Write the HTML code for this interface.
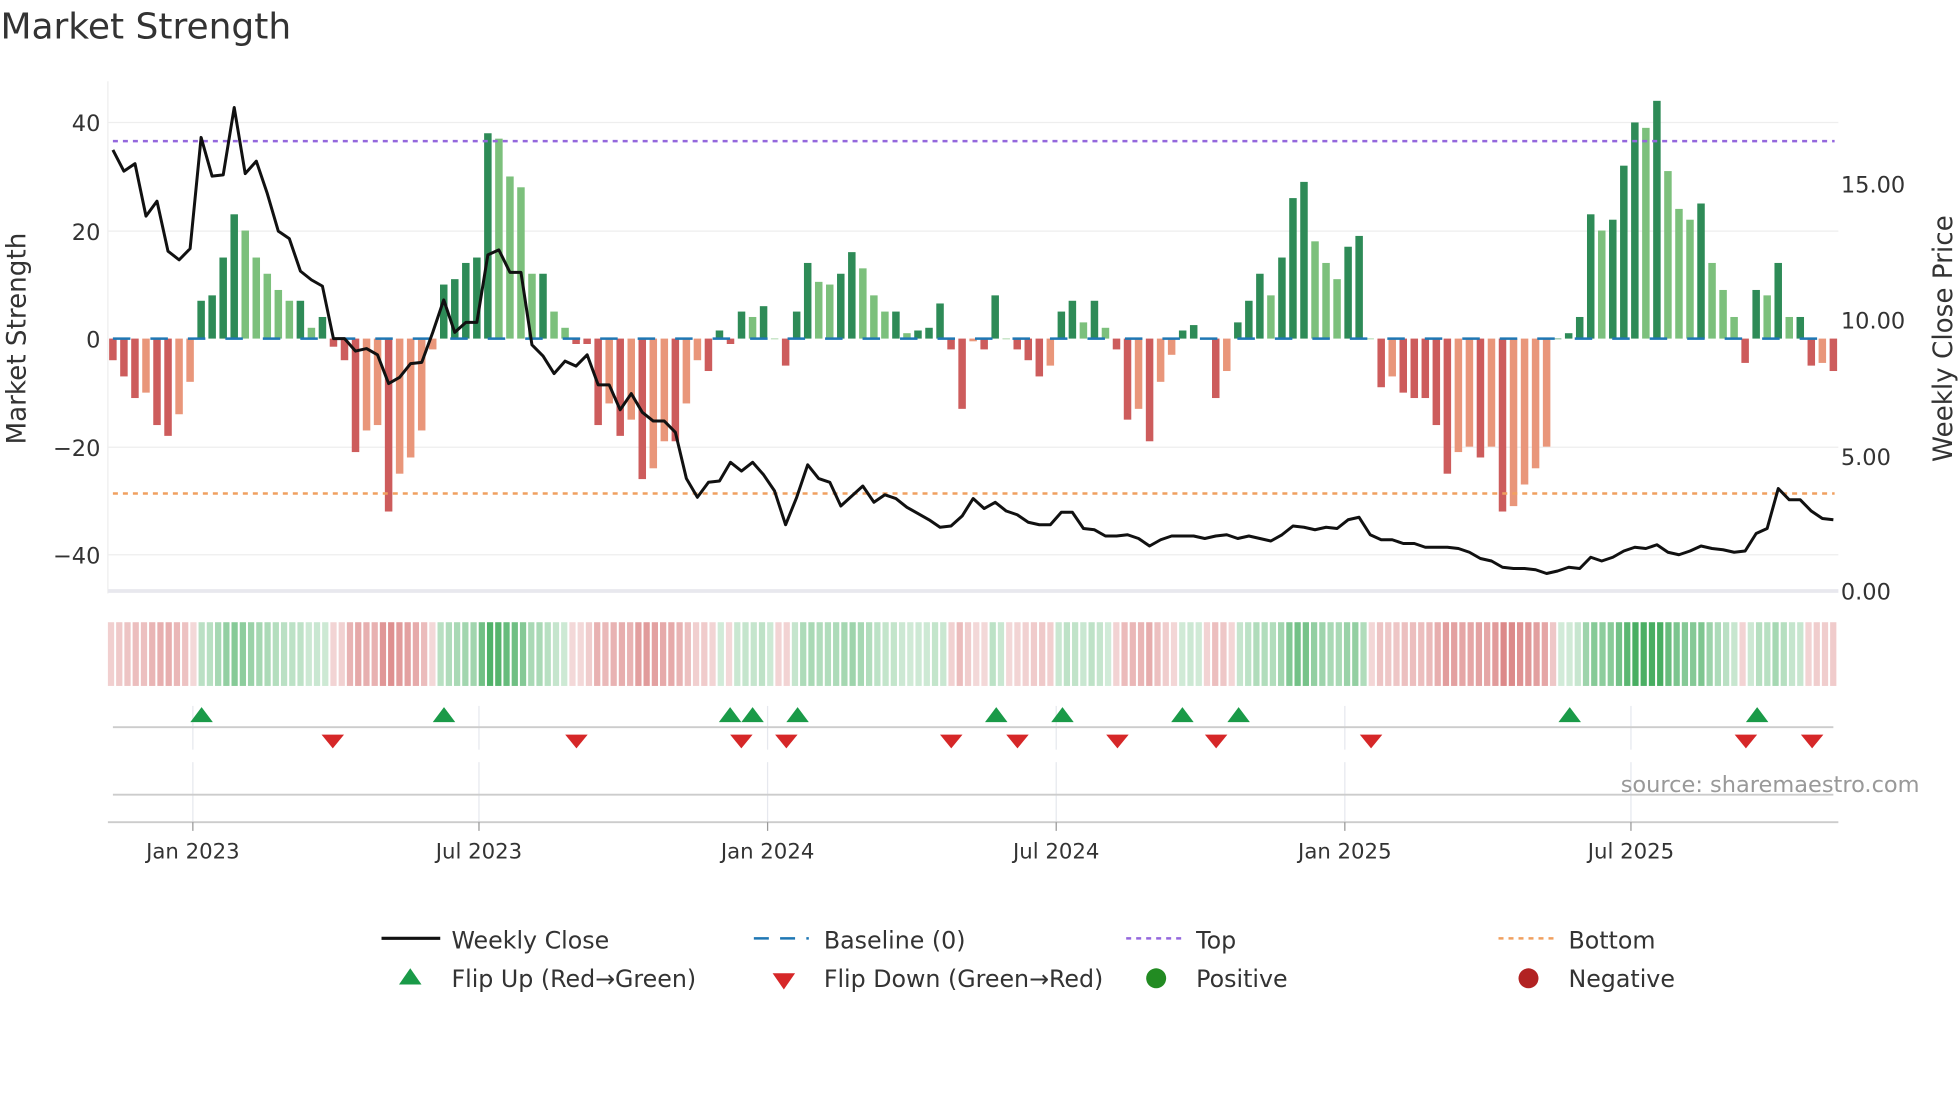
<!DOCTYPE html>
<html><head><meta charset="utf-8"><style>
html,body{margin:0;padding:0;background:#fff;}
svg{display:block;font-family:"DejaVu Sans","Liberation Sans",sans-serif;}
</style></head><body>
<svg id="s" width="1960" height="1102" viewBox="0 0 1568 882" xmlns="http://www.w3.org/2000/svg">
<rect width="1568" height="882" fill="#fff"/>
<text x="0" y="31" font-size="28.8" fill="#333">Market Strength</text>
<g stroke="#eeeeee" stroke-width="1">
<line x1="86" x2="1471" y1="98" y2="98"/><line x1="86" x2="1471" y1="185" y2="185"/>
<line x1="86" x2="1471" y1="358" y2="358"/><line x1="86" x2="1471" y1="444" y2="444"/>
<line x1="86" x2="86" y1="65" y2="475"/>
</g>
<line x1="86" x2="1471" y1="473" y2="473" stroke="#e8e8ee" stroke-width="3"/>
<g font-size="18" fill="#333" text-anchor="end">
<text x="80" y="105">40</text><text x="80" y="192">20</text><text x="80" y="278">0</text>
<text x="80" y="365">−20</text><text x="80" y="451">−40</text>
</g>
<g font-size="18" fill="#333">
<text x="1473" y="154">15.00</text><text x="1473" y="263">10.00</text>
<text x="1473" y="372">5.00</text><text x="1473" y="480">0.00</text>
</g>
<text transform="translate(20,271) rotate(-90)" font-size="21" fill="#333" text-anchor="middle">Market Strength</text>
<text transform="translate(1562,271) rotate(-90)" font-size="21" fill="#333" text-anchor="middle">Weekly Close Price</text>
<g id="bars"></g>
<line x1="90" x2="1468" y1="271" y2="271" stroke="#1f77b4" stroke-width="2" stroke-dasharray="14,16"/>
<line x1="90" x2="1468" y1="113" y2="113" stroke="#9467dd" stroke-width="2" stroke-dasharray="4,4"/>
<line x1="90" x2="1468" y1="395" y2="395" stroke="#f0a060" stroke-width="2" stroke-dasharray="4,4"/>
<polyline id="price" fill="none" stroke="#111" stroke-width="2.4" stroke-linejoin="round"/>
<g id="heat"></g>
<g stroke="#e6e8ee" stroke-width="1">
<line x1="154" x2="154" y1="565" y2="600"/><line x1="383" x2="383" y1="565" y2="600"/><line x1="614" x2="614" y1="565" y2="600"/><line x1="845" x2="845" y1="565" y2="600"/><line x1="1076" x2="1076" y1="565" y2="600"/><line x1="1305" x2="1305" y1="565" y2="600"/>
<line x1="154" x2="154" y1="610" y2="660"/><line x1="383" x2="383" y1="610" y2="660"/><line x1="614" x2="614" y1="610" y2="660"/><line x1="845" x2="845" y1="610" y2="660"/><line x1="1076" x2="1076" y1="610" y2="660"/><line x1="1305" x2="1305" y1="610" y2="660"/>
</g>
<line x1="90" x2="1467" y1="582" y2="582" stroke="#ccc" stroke-width="1.5"/>
<line x1="90" x2="1467" y1="636" y2="636" stroke="#ccc" stroke-width="1.5"/>
<line x1="86" x2="1471" y1="658" y2="658" stroke="#ccc" stroke-width="1.5"/>
<g stroke="#999" stroke-width="1"><line x1="154" x2="154" y1="658" y2="665"/><line x1="383" x2="383" y1="658" y2="665"/><line x1="614" x2="614" y1="658" y2="665"/><line x1="845" x2="845" y1="658" y2="665"/><line x1="1076" x2="1076" y1="658" y2="665"/><line x1="1305" x2="1305" y1="658" y2="665"/></g>
<g id="marks"></g>
<text x="1536" y="634" font-size="18" fill="#999" text-anchor="end">source: sharemaestro.com</text>
<g font-size="17" fill="#333" text-anchor="middle">
<text x="154" y="687">Jan 2023</text><text x="383" y="687">Jul 2023</text><text x="614" y="687">Jan 2024</text>
<text x="845" y="687">Jul 2024</text><text x="1076" y="687">Jan 2025</text><text x="1305" y="687">Jul 2025</text>
</g>
<g font-size="19" fill="#333">
<line x1="305" x2="352" y1="751" y2="751" stroke="#111" stroke-width="2.5"/>
<text x="361" y="759">Weekly Close</text>
<line x1="603" x2="647" y1="751" y2="751" stroke="#1f77b4" stroke-width="2" stroke-dasharray="12,9"/>
<text x="659" y="759">Baseline (0)</text>
<line x1="901" x2="945" y1="751" y2="751" stroke="#9467dd" stroke-width="2" stroke-dasharray="4,4"/>
<text x="957" y="759">Top</text>
<line x1="1199" x2="1243" y1="751" y2="751" stroke="#f0a060" stroke-width="2" stroke-dasharray="4,4"/>
<text x="1255" y="759">Bottom</text>
<polygon points="328,775 319,788 337,788" fill="#1a9a48"/>
<text x="361" y="790">Flip Up (Red→Green)</text>
<polygon points="618,779 636,779 627,792" fill="#d62728"/>
<text x="659" y="790">Flip Down (Green→Red)</text>
<circle cx="925" cy="783" r="8" fill="#228b22"/>
<text x="957" y="790">Positive</text>
<circle cx="1223" cy="783" r="8" fill="#b22222"/>
<text x="1255" y="790">Negative</text>
</g>
</svg>
<script>
var v=[-4,-7,-11,-10,-16,-18,-14,-8,7,8,15,23,20,15,12,9,7,7,2,4,-1.5,-4,-21,-17,-16,-32,-25,-22,-17,-2,10,11,14,15,38,37,30,28,12,12,5,2,-1,-1,-16,-12,-18,-15,-26,-24,-19,-19,-12,-4,-6,1.5,-1,5,4,6,0,-5,5,14,10.5,10,12,16,13,8,5,5,1,1.5,2,6.5,-2,-13,-0.5,-2,8,0,-2,-4,-7,-5,5,7,3,7,2,-2,-15,-13,-19,-8,-3,1.5,2.5,0,-11,-6,3,7,12,8,15,26,29,18,14,11,17,19,0,-9,-7,-10,-11,-11,-16,-25,-21,-20,-22,-20,-32,-31,-27,-24,-20,0,1,4,23,20,22,32,40,39,44,31,24,22,25,14,9,4,-4.5,9,8,14,4,4,-5,-4.5,-6];
var py=[120,137,131,173,161,201,208,199,110,141,140,86,139,129,155,185,191,217,224,229,271,271,281,279,284,307,302,291,290,266,240,266,258,258,204,200,218,218,276,285,299,289,293,284,308,308,328,315,330,337,337,346,383,398,386,385,370,377,370,380,393,420,398,372,383,386,405,397,389,402,396,399,406,411,416,422,421,413,399,407,402,409,412,418,420,420,410,410,423,424,429,429,428,431,437,432,429,429,429,431,429,428,431,429,431,433,428,421,422,424,422,423,416,414,428,432,432,435,435,438,438,438,439,442,447,449,454,455,455,456,459,457,454,455,446,449,446,441,438,439,436,442,444,441,437,439,440,442,441,427,423,391,400,400,409,415,416];
var n=v.length,x0=90,step=(1467-90)/(n-1),ns="http://www.w3.org/2000/svg";
function el(t,a,p){var e=document.createElementNS(ns,t);for(var k in a)e.setAttribute(k,a[k]);p.appendChild(e);return e;}
var bars=document.getElementById('bars'),pts=[];
for(var i=0;i<n;i++){var x=x0+i*step,val=v[i],prev=i?v[i-1]:0,c;
 if(val>=0)c=(val>=prev)?'#2e8b57':'#7cc07c';else c=(val<=prev)?'#cd5c5c':'#e9967a';
 var h=Math.abs(val)*4.325,y=val>=0?271-h:271;
 el('rect',{x:x-3,y:y,width:6,height:Math.max(h,0.5),fill:c},bars);
 pts.push(x.toFixed(1)+','+(py[i]||416));}
document.getElementById('price').setAttribute('points',pts.join(' '));
var heat=document.getElementById('heat'),m=210,w=(1471-86)/m;
for(var j=0;j<m;j++){var f=j/(m-1)*(n-1),a=Math.floor(f),b=Math.min(a+1,n-1),t=f-a,val=v[a]*(1-t)+v[b]*t;
 var s=Math.min(Math.abs(val)/40,1),c;
 if(val>=0)c='rgba(40,160,70,'+(0.2+0.65*s).toFixed(2)+')';else c='rgba(200,70,70,'+(0.2+0.55*s).toFixed(2)+')';
 el('rect',{x:86+j*w,y:498,width:w-1.6,height:51,fill:c},heat);}
var mk=document.getElementById('marks');
[161,355,584,602,638,797,850,946,991,1256,1406].forEach(function(x){el('polygon',{points:x+',566 '+(x-9)+',578 '+(x+9)+',578',fill:'#1a9a48'},mk);});
[266,461,593,629,761,814,894,973,1097,1397,1450].forEach(function(x){el('polygon',{points:(x-9)+',588 '+(x+9)+',588 '+x+',599',fill:'#d62728'},mk);});
</script>
</body></html>
